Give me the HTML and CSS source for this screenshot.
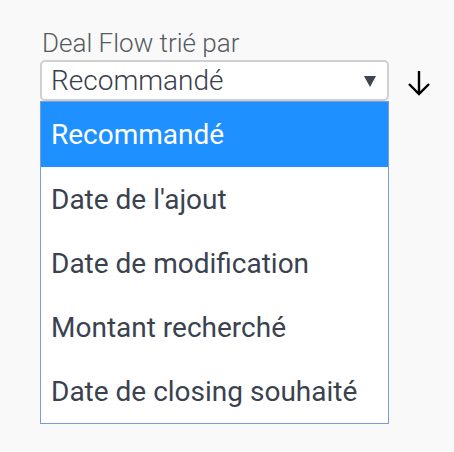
FILE: index.html
```html
<!DOCTYPE html>
<html lang="fr">
<head>
<meta charset="utf-8">
<link rel="stylesheet" href="styles.css">
</head>
<body>
<div class="field">
  <div class="label">Deal Flow trié par</div>
  <div class="row">
    <div class="select">
      <span class="value">Recommandé</span>
      <span class="caret"></span>
    </div>
    <svg class="arrow" width="24" height="28" viewBox="0 0 24 28" aria-hidden="true">
      <path d="M12 2 V25 M2 15 L12 25 L22 15" fill="none" stroke="#000" stroke-width="2.4"/>
    </svg>
  </div>
  <ul class="list">
    <li class="option active">Recommandé</li>
    <li class="option">Date de l'ajout</li>
    <li class="option">Date de modification</li>
    <li class="option">Montant recherché</li>
    <li class="option">Date de closing souhaité</li>
  </ul>
</div>
</body>
</html>
```
FILE: styles.css
```css
html, body {
  margin: 0;
  padding: 0;
  background: #f9f9f9;
  font-family: Roboto, "Liberation Sans", sans-serif;
}
.field {
  padding: 27px 0 0 40px;
}
.label {
  font-size: 26px;
  line-height: 32px;
  color: #555a60;
  padding-left: 2px;
  font-weight: 300;
}
.row {
  display: flex;
  align-items: flex-start;
  margin-top: 1px;
}
.select {
  box-sizing: border-box;
  width: 349px;
  height: 41px;
  background: #fff;
  border: 2px solid #d0d0d0;
  border-radius: 5px;
  display: flex;
  align-items: center;
  justify-content: space-between;
  padding: 0 10px 0 9px;
}
.value {
  font-size: 28px;
  color: #3a404a;
  font-weight: 300;
}
.caret {
  width: 0;
  height: 0;
  border-left: 6px solid transparent;
  border-right: 6px solid transparent;
  border-top: 11px solid #3e4451;
  margin-right: 1px;
  margin-top: 2px;
}
.arrow {
  margin: 9px 0 0 18px;
}
.list {
  list-style: none;
  margin: 0;
  padding: 0;
  box-sizing: border-box;
  width: 349px;
  border: 1px solid #7b9bdb;
  background: #fff;
}
.option {
  height: 64px;
  display: flex;
  align-items: center;
  padding-left: 10px;
  font-size: 28px;
  color: #3a4250;
}
.option.active {
  background: #1e90ff;
  color: #fff;
  height: 65px;
}
```
